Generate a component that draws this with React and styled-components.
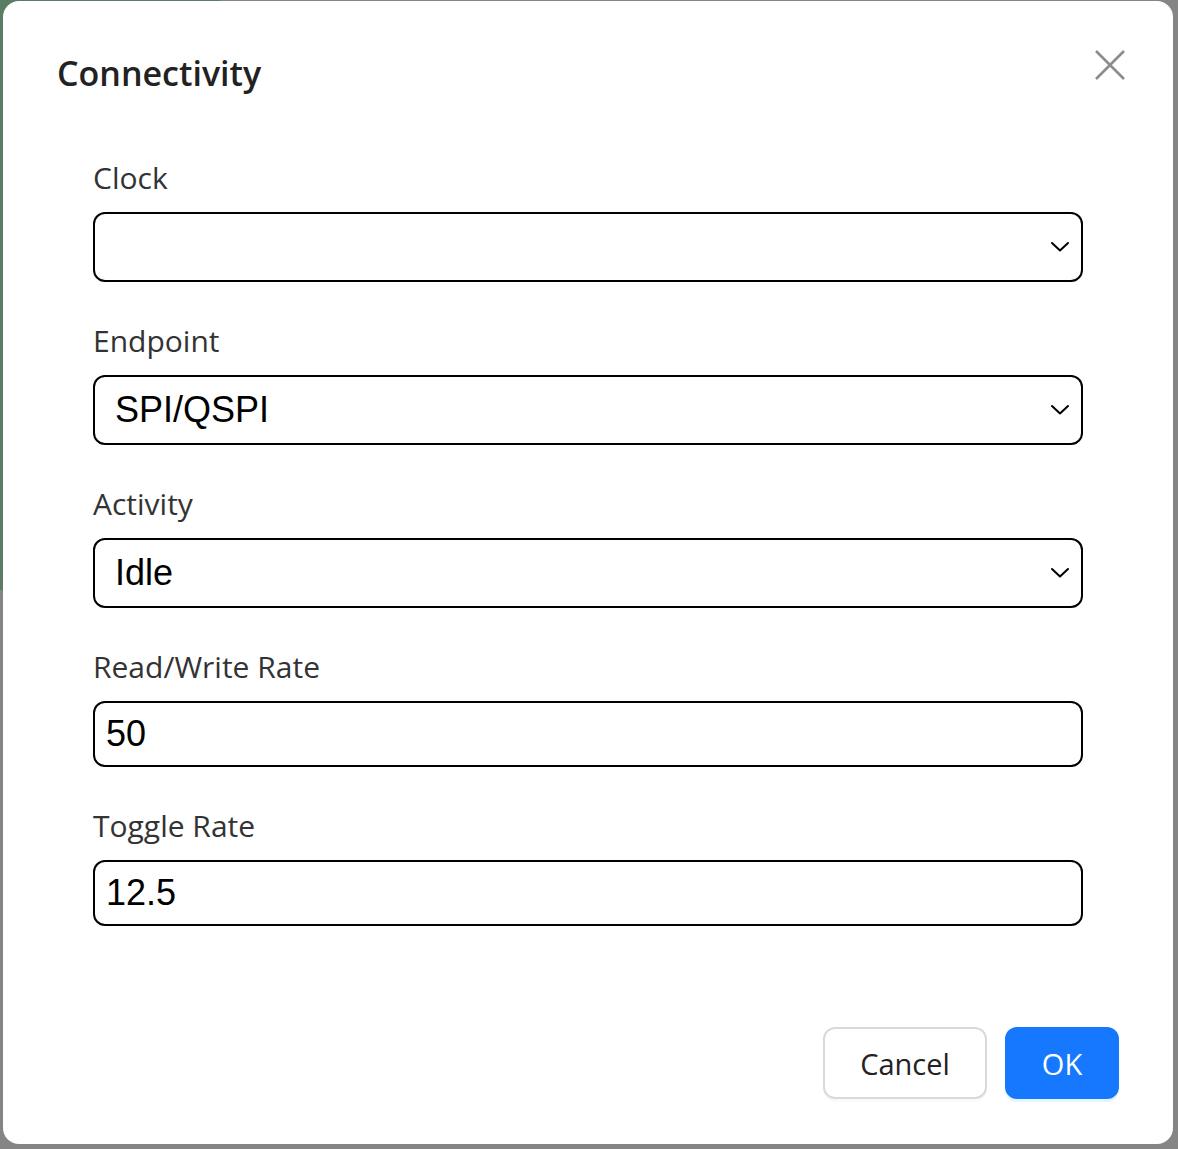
import React from 'react';
import styled, { createGlobalStyle } from 'styled-components';

const GlobalStyle = createGlobalStyle`
  html, body {
    margin: 0;
    padding: 0;
    height: 100%;
    background: #ffffff;
  }
  #root { height: 100%; }
`;

const Page = styled.div`
  display: flex;
  height: 100vh;
  overflow: hidden;
`;

const Sidebar = styled.div`
  width: 220px;
  height: 590px;
  background: #b0efbf;
`;

const Content = styled.div`
  flex: 1;
  background: #ffffff;
`;

const Overlay = styled.div`
  position: fixed;
  inset: 0;
  background: rgba(0, 0, 0, 0.48);
`;

const Dialog = styled.div`
  position: fixed;
  top: 1px;
  left: 3px;
  width: 1170px;
  height: 1143px;
  box-sizing: border-box;
  background: #ffffff;
  border-radius: 16px;
  padding: 52px 54px 45px;
  display: flex;
  flex-direction: column;
  font-family: "Open Sans", "Noto Sans", sans-serif;
`;

const Header = styled.div`
  display: flex;
  justify-content: space-between;
  align-items: flex-start;
`;

const Title = styled.h2`
  margin: 0;
  font-size: 34px;
  line-height: 40px;
  font-weight: 600;
  color: #222222;
`;

const CloseButton = styled.button`
  border: 0;
  background: none;
  padding: 0;
  margin: -5px -8px 0 0;
  width: 34px;
  height: 34px;
  display: flex;
  align-items: center;
  justify-content: center;
  color: #8c8c8c;
  cursor: pointer;
`;

const Form = styled.div`
  display: flex;
  flex-direction: column;
  gap: 39px;
  padding: 65px 36px 0;
`;

const Field = styled.div`
  display: flex;
  flex-direction: column;
  gap: 14px;
`;

const Label = styled.label`
  font-size: 30px;
  line-height: 40px;
  color: #333333;
`;

const SelectBox = styled.div`
  height: 70px;
  box-sizing: border-box;
  border: 2px solid #000000;
  border-radius: 12px;
  padding: 0 10px 0 20px;
  display: flex;
  align-items: center;
  justify-content: space-between;
  font-family: "Liberation Sans", Arial, sans-serif;
  font-size: 36px;
  color: #000000;
`;

const TextInput = styled.input`
  height: 66px;
  box-sizing: border-box;
  border: 2px solid #000000;
  border-radius: 12px;
  padding: 0 11px;
  font-family: "Liberation Sans", Arial, sans-serif;
  font-size: 36px;
  color: #000000;
  outline: none;
`;

const Footer = styled.div`
  margin-top: auto;
  display: flex;
  justify-content: flex-end;
  gap: 18px;
`;

const Button = styled.button`
  height: 72px;
  box-sizing: border-box;
  padding: 0;
  width: ${p => (p.$primary ? '114px' : '164px')};
  border-radius: 12px;
  font-family: "Open Sans", "Noto Sans", sans-serif;
  font-size: 29px;
  cursor: pointer;
  border: 2px solid ${p => (p.$primary ? '#1677ff' : '#d9d9d9')};
  background: ${p => (p.$primary ? '#1677ff' : '#ffffff')};
  color: ${p => (p.$primary ? '#ffffff' : '#222222')};
  box-shadow: ${p => (p.$primary ? '0 3px 0 rgba(5, 145, 255, 0.1)' : '0 3px 0 rgba(0, 0, 0, 0.02)')};
`;

const Chevron = () => (
  <svg width="22" height="22" viewBox="0 0 22 22" fill="none">
    <polyline points="3,7 11,14.5 19,7" stroke="#000" strokeWidth="2" strokeLinecap="round" strokeLinejoin="round" />
  </svg>
);

const CloseIcon = () => (
  <svg width="32" height="32" viewBox="0 0 32 32">
    <path d="M2 2 L30 30 M30 2 L2 30" stroke="currentColor" strokeWidth="2.6" />
  </svg>
);

const selects = [
  { label: 'Clock', value: '' },
  { label: 'Endpoint', value: 'SPI/QSPI' },
  { label: 'Activity', value: 'Idle' },
];

const inputs = [
  { label: 'Read/Write Rate', value: '50' },
  { label: 'Toggle Rate', value: '12.5' },
];

export default function App() {
  return (
    <>
      <GlobalStyle />
      <Page>
        <Sidebar />
        <Content />
      </Page>
      <Overlay />
      <Dialog role="dialog">
        <Header>
          <Title>Connectivity</Title>
          <CloseButton aria-label="Close">
            <CloseIcon />
          </CloseButton>
        </Header>
        <Form>
          {selects.map(s => (
            <Field key={s.label}>
              <Label>{s.label}</Label>
              <SelectBox>
                <span>{s.value}</span>
                <Chevron />
              </SelectBox>
            </Field>
          ))}
          {inputs.map(i => (
            <Field key={i.label}>
              <Label>{i.label}</Label>
              <TextInput defaultValue={i.value} />
            </Field>
          ))}
        </Form>
        <Footer>
          <Button>Cancel</Button>
          <Button $primary>OK</Button>
        </Footer>
      </Dialog>
    </>
  );
}
